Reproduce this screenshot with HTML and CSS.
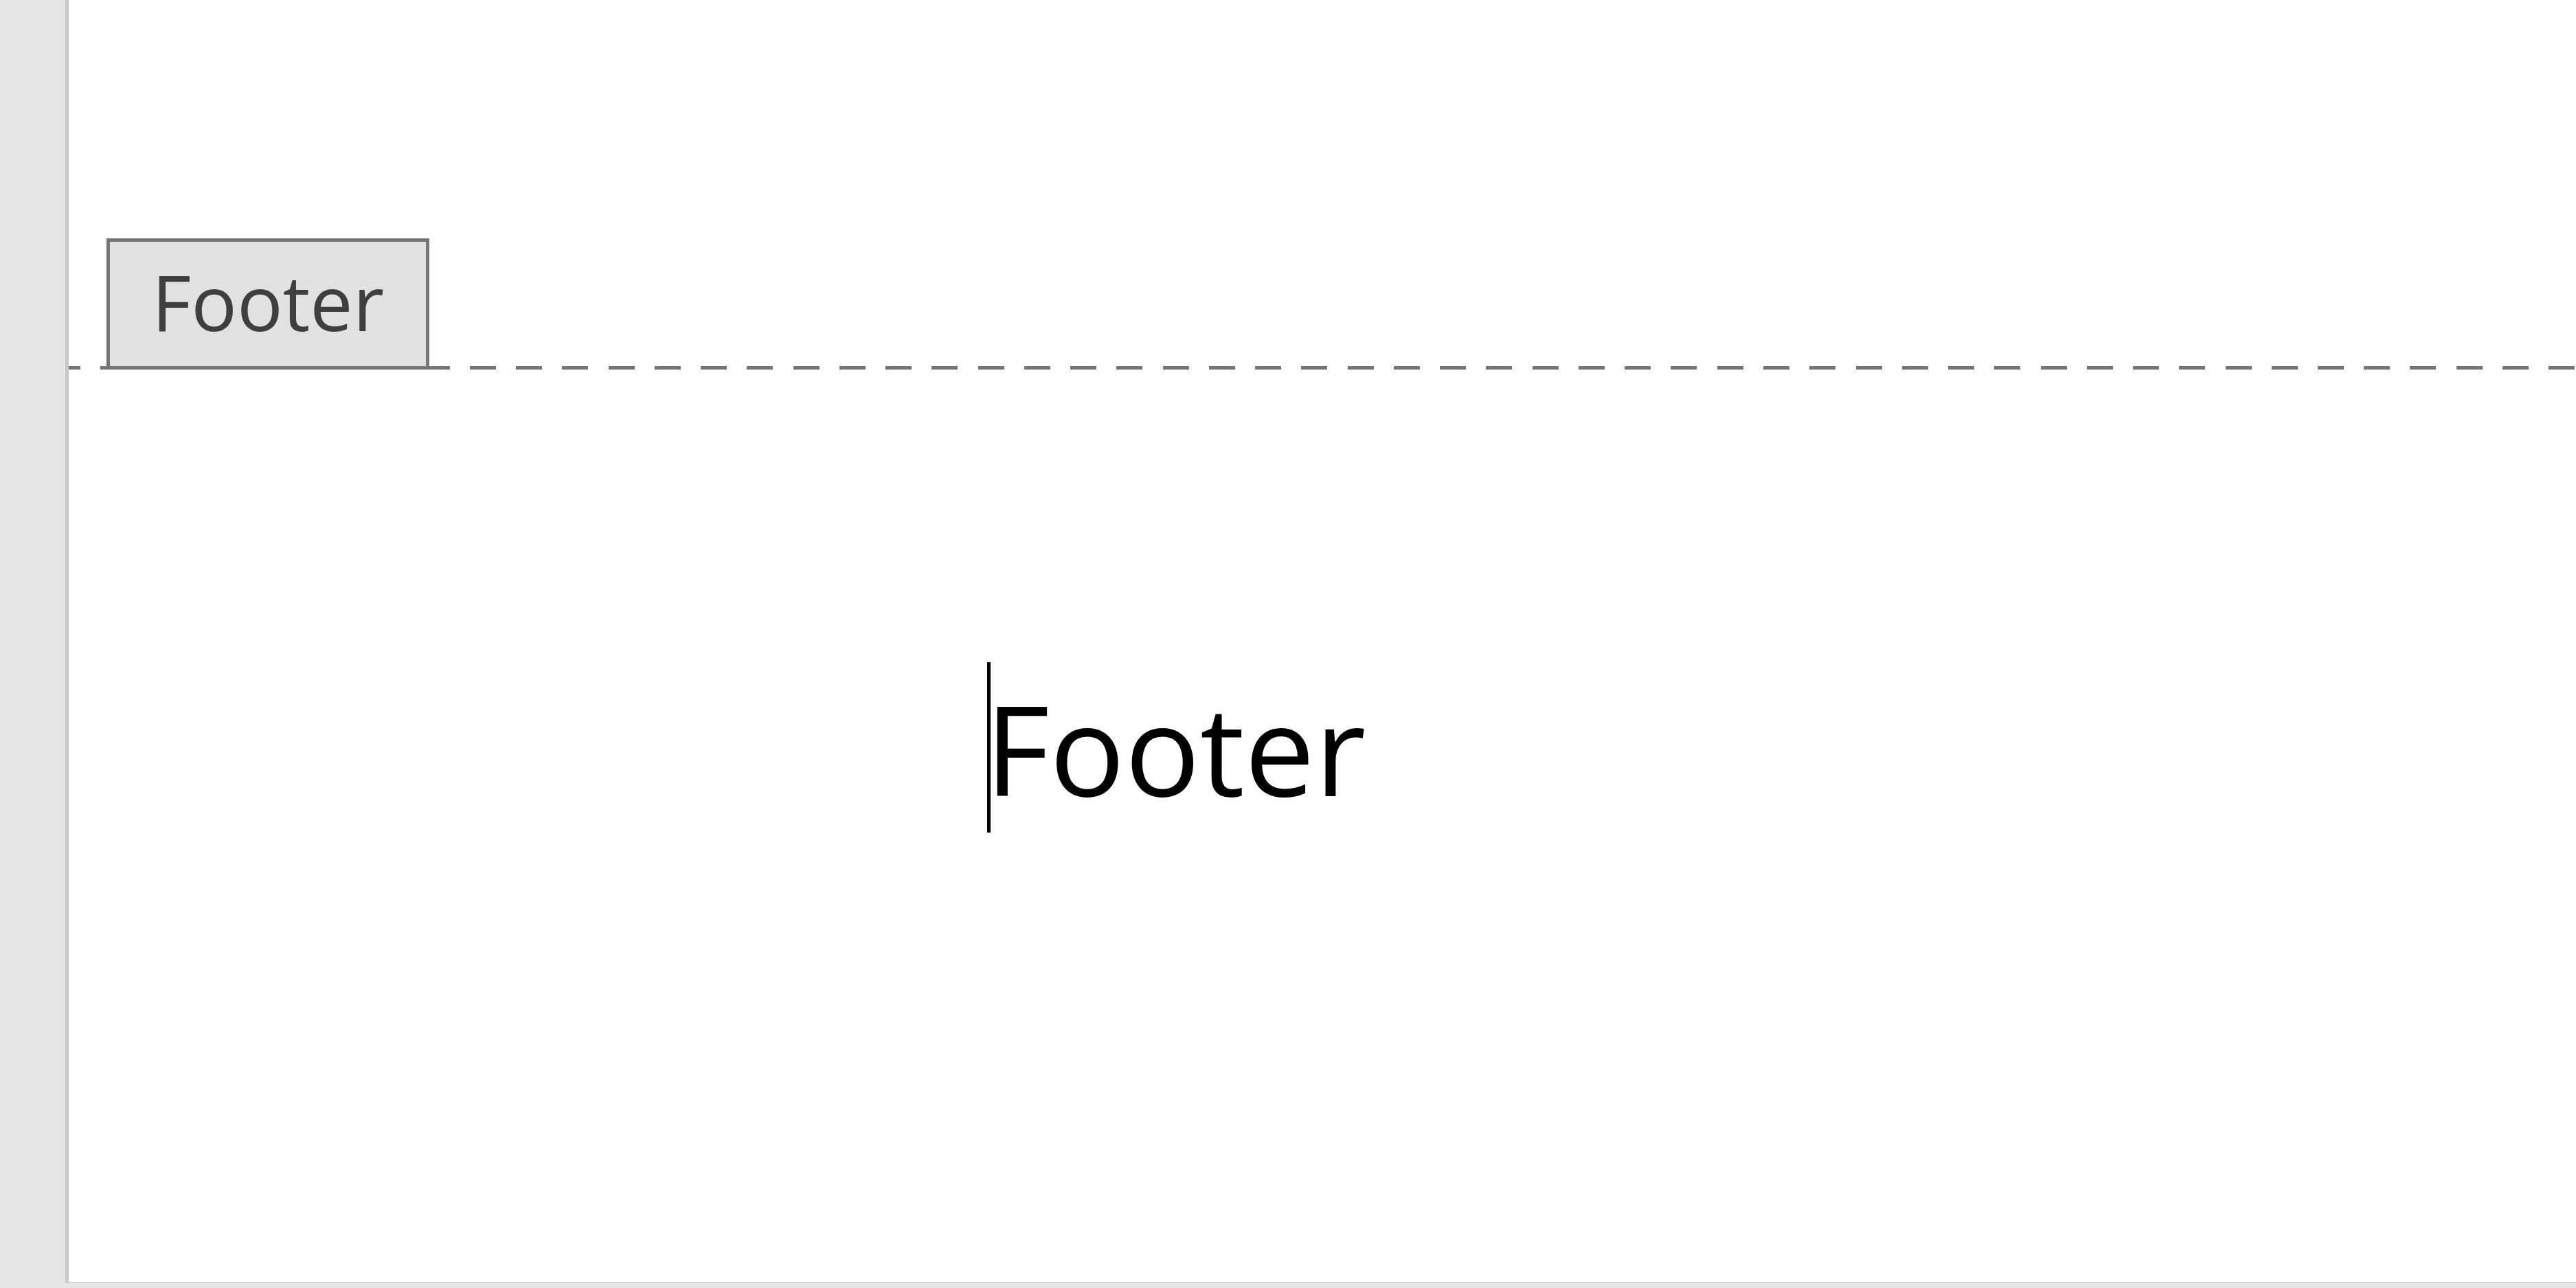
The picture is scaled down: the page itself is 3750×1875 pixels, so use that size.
FILE: index.html
```html
<!DOCTYPE html>
<html>

<head>
	<link rel="stylesheet" href="styles.css">
</head>

<body>
	<div class="gutter"></div>
	<div class="page">
		<div class="footer-bar">
			<div class="footer-tab">Footer</div>
		</div>
		<p class="footer-text"><span class="caret"></span>Footer</p>
	</div>
</body>

</html>
```

FILE: styles.css
```css
html, body {
	margin: 0;
	padding: 0;
	height: 100%;
	overflow: hidden;
}

body {
	font-family: 'Open Sans', 'Noto Sans', 'DejaVu Sans', sans-serif;
	background-color: #e6e6e6;
	display: flex;
	align-items: flex-start;
}

.gutter {
	width: 95px;
	flex: none;
}

.page {
	flex: 1;
	box-sizing: border-box;
	height: 1868px;
	background-color: #ffffff;
	border-left: 5px solid #c8c8c8;
	border-bottom: 2px solid #d2d2d2;
	padding-top: 347px;
}

/* dashed boundary of the footer area, the tab sits on it */
.footer-bar {
	height: 191px;
	display: flex;
	align-items: flex-end;
	background-image: repeating-linear-gradient(90deg, #767676 0 16.75px, transparent 16.75px 46px, #767676 46px 67.25px);
	background-size: 100% 5px;
	background-position: left bottom;
	background-repeat: no-repeat;
}

.footer-tab {
	box-sizing: border-box;
	width: 470px;
	height: 191px;
	margin-left: 55px;
	padding-top: 11px;
	border: 5px solid #767676;
	background-color: #e1e1e1;
	color: #3f3f3f;
	font-size: 111px;
	line-height: normal;
	text-align: center;
}

.footer-text {
	position: relative;
	margin: 426px 0 0 1334px;
	font-size: 182px;
	line-height: 248px;
	color: #000000;
}

.caret {
	position: absolute;
	left: 3px;
	top: 0;
	width: 5px;
	height: 248px;
	background-color: #000000;
}
```
